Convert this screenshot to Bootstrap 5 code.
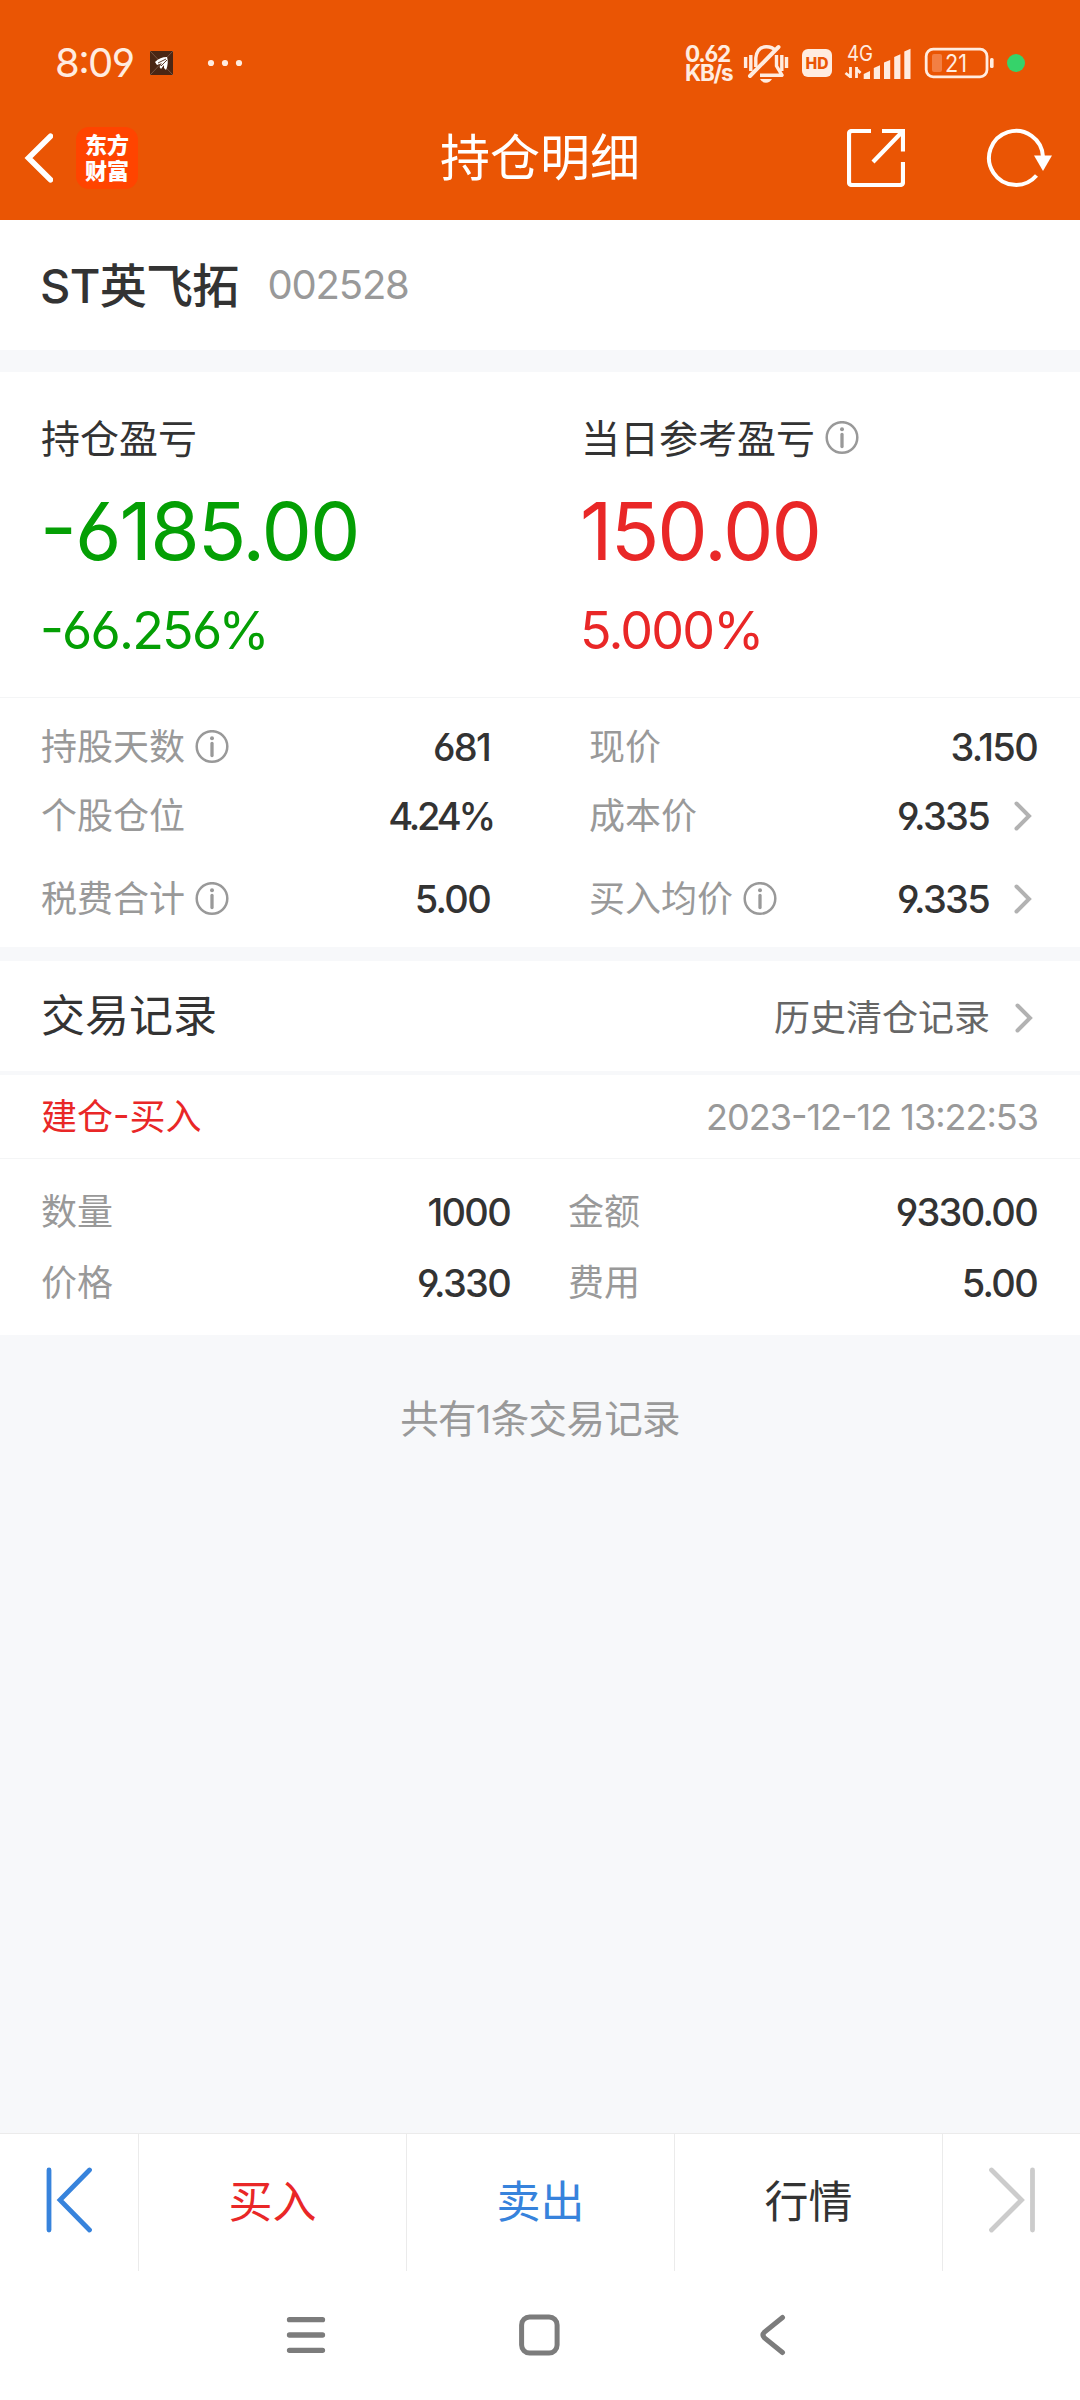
<!DOCTYPE html>
<html lang="zh-CN">
<head>
<meta charset="utf-8">
<meta name="viewport" content="width=device-width, initial-scale=1">
<title>持仓明细</title>
<link href="https://cdn.jsdelivr.net/npm/bootstrap@5.3.0/dist/css/bootstrap.min.css" rel="stylesheet">
<script src="https://cdn.jsdelivr.net/npm/bootstrap@5.3.0/dist/js/bootstrap.bundle.min.js"></script>
<style>
body{width:1080px;height:2400px;background:#f7f8fa;color:#333;font-family:Inter,"Noto Sans CJK SC",sans-serif;font-size:36px;line-height:1;font-feature-settings:"cv03","cv04","case";overflow:hidden;white-space:nowrap}
svg{display:block;flex:none}
.topbar{background:#ea5504;height:220px;color:#fff}
.status-row{height:95px;padding:31px 55px 0 55px;color:#ffece0}
.title-row{height:125px;padding:0 27px 0 24px}
.clock{font-size:40px;width:95px;letter-spacing:-1.6px}
.dots{margin-left:34px}
.netspeed{font-size:22.5px;font-weight:700;line-height:19px;width:56px;letter-spacing:-1.3px}
.applogo{width:62px;height:62px;border-radius:13px;background:#ff4400;font-size:22px;line-height:26px;font-weight:900;margin-left:23px}
.page-title{font-size:50px}
.refresh{margin-left:81px}
.stock-row{height:130px;padding-left:40px}
.stock-name{font-size:47px;font-weight:500;letter-spacing:-.7px}
.stock-code{font-size:40px;color:#999;margin-left:29px;letter-spacing:-1.2px}
.gap-band{height:22px}
.summary{height:326px;padding:37px 0 0 41px;border-bottom:1px solid #f4f5f6}
.sum-col{width:540px}
.sum-label{height:58px;font-size:39px}
.sum-big{height:127px;font-size:80px;letter-spacing:-1.9px;margin-left:-1px}
.sum-pct{height:74px;font-size:52px;letter-spacing:-1.8px;margin-left:-1px}
.down{color:#049f04}.up{color:#e92727}
.detail{height:249px;padding:14px 43px 0 41px}
.cell-row{height:69px}.cell-tall{height:97px}
.left-col{width:449px}.right-col{width:448px}
.soft{color:#999}
.stamp{letter-spacing:-1px}
.val{font-weight:500;font-size:38px;letter-spacing:-1.7px}
.val-pct{letter-spacing:-3.2px;margin-right:-3px}
.info{margin-left:10px}
.chev{margin:0 5px 0 25px}
.trade-head{height:110px;padding:0 42px 0 41px;margin-top:14px}
.sec-title{font-size:44px}
.hist{color:#666;padding-top:4px}
.trade-item{height:84px;margin-top:4px;padding:0 42px 0 41px;border-bottom:1px solid #f4f5f6}
.deal{height:176px;padding:17px 43px 17px 41px}
.deal .cell-row{height:71px}
.deal-left{width:469px}.deal-right{width:469px}
.total{height:798px;padding-top:65px;color:#999;font-size:38.5px;letter-spacing:-.7px}
.tabs{height:138px;border-top:1px solid #ebebeb;font-size:44px}
.tabs>div{padding-bottom:2px}
.tabs>.tab-end{width:138px;padding-bottom:6px}
.tabs>*+*{border-left:1px solid #ebebeb}
.edge{margin-left:45px}
.sell{color:#3783dc}
.sysnav{height:128px;padding-left:286px}
.sys-home{margin-left:193px}.sys-back{margin-left:199px}
</style>
</head>
<body class="m-0">
<svg width="0" height="0" class="position-absolute"><defs>
<symbol id="info" viewBox="0 0 34 34"><circle cx="17" cy="16.500" r="15.300" fill="none" stroke="#999" stroke-width="2.500"/><circle cx="17" cy="8.200" r="2" fill="#999"/><path d="M17 13.500V25.500" stroke="#999" stroke-width="3.300" stroke-linecap="round"/></symbol>
<symbol id="chev" viewBox="0 0 18 30"><path d="M2.500 2.500L15 15L2.500 27.500" fill="none" stroke="#b2b2b2" stroke-width="4" stroke-linecap="round"/></symbol>
</defs></svg>
<header class="topbar">
 <div class="status-row d-flex align-items-center">
  <span class="clock">8:09</span>
  <svg width="23" height="24" viewBox="0 0 23 24"><rect width="23" height="24" fill="#4a2614"/><path d="M0 0L23 24M23 0L0 24" stroke="#8a6a58" stroke-width=".7"/><path d="M5 11Q10 6 17 6Q19 12 16 19L14 17L14 14L11 18L9.500 16L12 12L7 14Z" fill="#fff"/><path d="M8 12L16 8M11 15L17 9" stroke="#4a2614" stroke-width=".9"/></svg>
  <svg class="dots" width="36" height="8" viewBox="0 0 36 8"><g fill="#ffece0"><circle cx="4" cy="4" r="3.100"/><circle cx="18" cy="4" r="3.100"/><circle cx="32" cy="4" r="3.100"/></g></svg>
  <div class="netspeed ms-auto"><div>0.62</div><div>KB/s</div></div>
  <svg width="284" height="60" viewBox="741 33 284 60">
   <g fill="none" stroke="#ffece0" stroke-width="3.400">
    <path d="M745.600 57V68M750.800 55V71M781.800 55V71M786.500 57V68"/>
    <path d="M755.800 67V58Q757 47 766 46.700Q772 46.500 775 50"/>
    <path d="M776.500 55V66L782 75.200H760" stroke-linejoin="round"/>
    <path d="M750 76L778.500 47" stroke-width="4" stroke-linecap="round"/>
   </g>
   <path d="M760 79H772Q770 82.700 766 82.700Q762 82.700 760 79Z" fill="#ffece0"/>
   <rect x="802" y="49" width="30" height="28" rx="6" fill="#ffece0"/>
   <text x="805.500" y="69" font-size="16" font-weight="800" fill="#ea5504" textLength="23" lengthAdjust="spacingAndGlyphs">HD</text>
   <text x="847" y="61" font-size="21" fill="#ffece0" textLength="26" lengthAdjust="spacingAndGlyphs">4G</text>
   <path d="M850.500 67V78M856.500 67V78M850.500 77L845.500 73M856.500 69L860.500 73" fill="none" stroke="#ffece0" stroke-width="2.800"/>
   <g fill="#ffece0"><path d="M863.700 79V74L870 71V79ZM873.800 79V68L880 65.300V79ZM884 79V62.500L890.200 60V79ZM894.200 79V57L900.400 54.300V79ZM904.300 79V51.500L910.500 48.700V79Z"/></g>
   <rect x="926.200" y="49.200" width="60.800" height="27.600" rx="7" fill="none" stroke="#ffece0" stroke-width="2.800"/>
   <rect x="990" y="58" width="3.600" height="10" rx="1.500" fill="#ffece0"/>
   <rect x="932" y="54" width="10" height="18" rx="2" fill="#f37f43"/>
   <text x="945" y="72" font-size="24.500" fill="#ffece0" textLength="22" lengthAdjust="spacingAndGlyphs">21</text>
   <circle cx="1016" cy="63" r="9" fill="#36d36a"/>
  </svg>
 </div>
 <div class="title-row d-flex align-items-center position-relative">
  <svg width="29" height="50" viewBox="0 0 29 50"><path d="M26.500 3.200L4.500 25L26.500 46.800" fill="none" stroke="#fff" stroke-width="5.600" stroke-linecap="round"/></svg>
  <div class="applogo d-flex flex-column align-items-center justify-content-center"><div>东方</div><div>财富</div></div>
  <h1 class="page-title fw-normal m-0 position-absolute start-50 translate-middle-x">持仓明细</h1>
  <svg class="ms-auto" width="58" height="58" viewBox="0 0 58 58"><path d="M24 2H5Q2 2 2 5V53Q2 56 5 56H53Q56 56 56 53V33M35 2H56V22.500M55 3L26 33" fill="none" stroke="#fff" stroke-width="4.200"/></svg>
  <svg class="refresh" width="67" height="60" viewBox="986 128 67 60"><path d="M1036.500 175.500A27 27 0 1 1 1043 157" fill="none" stroke="#fff" stroke-width="4"/><path d="M1034 155.500H1052L1043 171Z" fill="#fff"/></svg>
 </div>
</header>
<main>
<section class="stock-row bg-white d-flex align-items-center"><span class="stock-name">ST英飞拓</span><span class="stock-code">002528</span></section>
<div class="gap-band"></div>
<section class="summary bg-white d-flex">
 <div class="sum-col"><div class="sum-label d-flex align-items-center">持仓盈亏</div><div class="sum-big down d-flex align-items-center">-6185.00</div><div class="sum-pct down d-flex align-items-center">-66.256%</div></div>
 <div><div class="sum-label d-flex align-items-center">当日参考盈亏<svg class="info" width="34" height="34"><use href="#info"/></svg></div><div class="sum-big up d-flex align-items-center">150.00</div><div class="sum-pct up d-flex align-items-center">5.000%</div></div>
</section>
<section class="detail bg-white d-flex justify-content-between">
 <div class="left-col">
  <div class="cell-row d-flex align-items-center"><span class="soft">持股天数</span><svg class="info" width="34" height="34"><use href="#info"/></svg><span class="val ms-auto">681</span></div>
  <div class="cell-row d-flex align-items-center"><span class="soft">个股仓位</span><span class="val val-pct ms-auto">4.24%</span></div>
  <div class="cell-tall d-flex align-items-center"><span class="soft">税费合计</span><svg class="info" width="34" height="34"><use href="#info"/></svg><span class="val ms-auto">5.00</span></div>
 </div>
 <div class="right-col">
  <div class="cell-row d-flex align-items-center"><span class="soft">现价</span><span class="val ms-auto">3.150</span></div>
  <div class="cell-row d-flex align-items-center"><span class="soft">成本价</span><span class="val ms-auto">9.335</span><svg class="chev" width="18" height="30"><use href="#chev"/></svg></div>
  <div class="cell-tall d-flex align-items-center"><span class="soft">买入均价</span><svg class="info" width="34" height="34"><use href="#info"/></svg><span class="val ms-auto">9.335</span><svg class="chev" width="18" height="30"><use href="#chev"/></svg></div>
 </div>
</section>
<section class="trade-head bg-white d-flex align-items-center"><h2 class="sec-title fw-normal m-0">交易记录</h2><div class="hist ms-auto d-flex align-items-center"><span>历史清仓记录</span><svg class="chev" width="18" height="30"><use href="#chev"/></svg></div></section>
<section class="trade-item bg-white d-flex align-items-center justify-content-between"><span class="up">建仓-买入</span><span class="soft stamp">2023-12-12 13:22:53</span></section>
<section class="deal bg-white d-flex justify-content-between">
 <div class="deal-left"><div class="cell-row d-flex align-items-center justify-content-between"><span class="soft">数量</span><span class="val">1000</span></div><div class="cell-row d-flex align-items-center justify-content-between"><span class="soft">价格</span><span class="val">9.330</span></div></div>
 <div class="deal-right"><div class="cell-row d-flex align-items-center justify-content-between"><span class="soft">金额</span><span class="val">9330.00</span></div><div class="cell-row d-flex align-items-center justify-content-between"><span class="soft">费用</span><span class="val">5.00</span></div></div>
</section>
<div class="total text-center">共有1条交易记录</div>
</main>
<footer class="bg-white">
 <div class="tabs d-flex">
  <div class="tab-end d-flex align-items-center"><svg class="edge" width="48" height="66" viewBox="0 0 48 66"><path d="M4 3V63M44.500 3L15 33L44.500 63" fill="none" stroke="#3783dc" stroke-width="4.800" stroke-linecap="round"/></svg></div>
  <div class="flex-fill d-flex align-items-center justify-content-center up">买入</div>
  <div class="flex-fill d-flex align-items-center justify-content-center sell">卖出</div>
  <div class="flex-fill d-flex align-items-center justify-content-center">行情</div>
  <div class="tab-end d-flex align-items-center"><svg class="edge" width="48" height="66" viewBox="0 0 48 66"><path d="M44.500 3V63M3.500 3L33.500 33L3.500 63" fill="none" stroke="#ccc" stroke-width="4.800" stroke-linecap="round"/></svg></div>
 </div>
 <nav class="sysnav d-flex align-items-center">
  <svg width="40" height="42" viewBox="0 0 40 42"><path d="M3.500 5.700H36.500M3.500 21H36.500M3.500 36.300H36.500" stroke="#7c7c7c" stroke-width="5.300" stroke-linecap="round"/></svg>
  <svg class="sys-home" width="41" height="42" viewBox="0 0 41 42"><rect x="2.600" y="3" width="35.500" height="36" rx="8" fill="none" stroke="#7c7c7c" stroke-width="5"/></svg>
  <svg class="sys-back" width="27" height="42" viewBox="0 0 27 42"><path d="M23.500 3.500L5.500 18Q2.500 21 5.500 24L23.500 38.500" fill="none" stroke="#7c7c7c" stroke-width="5" stroke-linecap="round"/></svg>
 </nav>
 <div class="pb-1"></div>
</footer>
</body>
</html>
